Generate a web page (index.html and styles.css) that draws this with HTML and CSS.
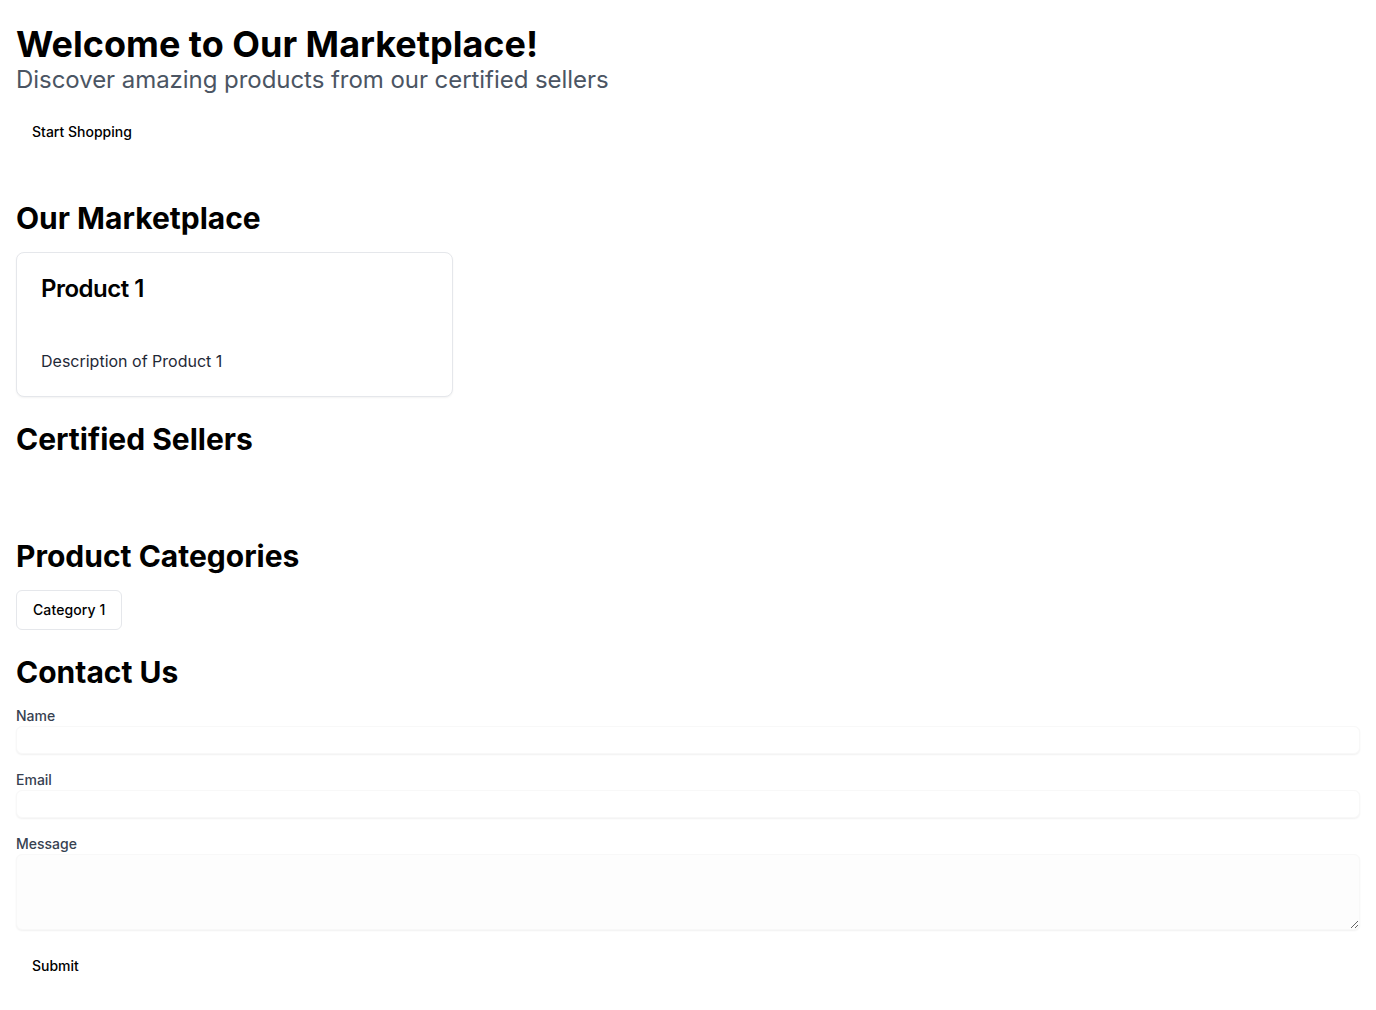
FILE: index.html
```html
<!DOCTYPE html>
<html lang="en">
<head>
<meta charset="utf-8">
<title>Marketplace</title>
<link rel="stylesheet" href="styles.css">
</head>
<body>
<main class="page">
  <header class="hero">
    <h1 class="hero-title">Welcome to Our Marketplace!</h1>
    <p class="hero-sub">Discover amazing products from our certified sellers</p>
    <button class="btn-ghost hero-btn" type="button">Start Shopping</button>
  </header>

  <section class="section first">
    <h2 class="section-title">Our Marketplace</h2>
    <div class="grid">
      <div class="card">
        <div class="card-header">
          <h3 class="card-title">Product 1</h3>
        </div>
        <div class="card-content">
          <p class="card-text">Description of Product 1</p>
        </div>
      </div>
    </div>
  </section>

  <section class="section">
    <h2 class="section-title">Certified Sellers</h2>
    <div class="grid sellers"></div>
  </section>

  <section class="section">
    <h2 class="section-title">Product Categories</h2>
    <div class="chips">
      <button class="btn-outline" type="button">Category 1</button>
    </div>
  </section>

  <section class="section">
    <h2 class="section-title">Contact Us</h2>
    <form class="form">
      <div class="field">
        <label class="label" for="name">Name</label>
        <input class="input" id="name" type="text">
      </div>
      <div class="field">
        <label class="label" for="email">Email</label>
        <input class="input" id="email" type="email">
      </div>
      <div class="field">
        <label class="label" for="message">Message</label>
        <textarea class="input textarea" id="message"></textarea>
      </div>
      <button class="btn-ghost" type="button">Submit</button>
    </form>
  </section>
</main>
</body>
</html>
```

FILE: styles.css
```css
* { box-sizing: border-box; }
html, body { margin: 0; padding: 0; background: #ffffff; }
body {
  font-family: Inter, "Noto Sans", "Liberation Sans", sans-serif;
  color: #000;
}
.page { padding: 24px 16px 16px; }

.hero { display: flex; flex-direction: column; align-items: flex-start; }
.hero-title { margin: 0; font-size: 36px; line-height: 40px; font-weight: 700; }
.hero-sub { margin: 0; font-size: 24px; line-height: 32px; color: #4b5563; font-weight: 400; letter-spacing: -0.05px; }
.hero-btn { margin-top: 15px; }

.btn-ghost {
  font-family: inherit;
  height: 40px;
  padding: 0 16px;
  border: none;
  background: transparent;
  font-size: 14px;
  font-weight: 500;
  color: #000;
  border-radius: 6px;
}
.btn-outline {
  font-family: inherit;
  height: 40px;
  padding: 0 16px 1px;
  border: 1px solid #e5e7eb;
  background: #fff;
  font-size: 14px;
  font-weight: 500;
  color: #000;
  border-radius: 6px;
  letter-spacing: 0.1px;
}

.section { margin-bottom: 24px; }
.section.first { margin-top: 49px; }
.section-title { margin: 0 0 16px; font-size: 30px; line-height: 36px; font-weight: 700; }

.grid { display: grid; grid-template-columns: repeat(3, 1fr); gap: 16px; }
.sellers { min-height: 41px; }

.card {
  border: 1px solid #e5e7eb;
  border-radius: 8px;
  background: #fff;
  box-shadow: 0 1px 2px rgba(0,0,0,0.05);
}
.card-header { padding: 24px 24px 48px; }
.card-title { margin: 0; font-size: 24px; line-height: 24px; font-weight: 600; letter-spacing: -0.5px; }
.card-content { padding: 0 24px 23px; }
.card-text { margin: 0; font-size: 16px; line-height: 24px; color: #1f2937; }

.chips { display: flex; gap: 8px; }

.form { display: flex; flex-direction: column; }
.field { display: flex; flex-direction: column; margin-bottom: 16px; }
.label { font-size: 14px; line-height: 20px; font-weight: 500; color: #374151; }
.input {
  width: 100%;
  height: 28px;
  border: 1px solid #f8f8f8;
  border-radius: 6px;
  background: #fff;
  box-shadow: 0 1px 2px rgba(0,0,0,0.06);
  font-family: inherit;
  font-size: 14px;
  padding: 2px 8px;
}
.textarea { height: 76px; resize: vertical; background: #fdfdfd; }
.form .btn-ghost { align-self: flex-start; margin-top: -1px; }
```
